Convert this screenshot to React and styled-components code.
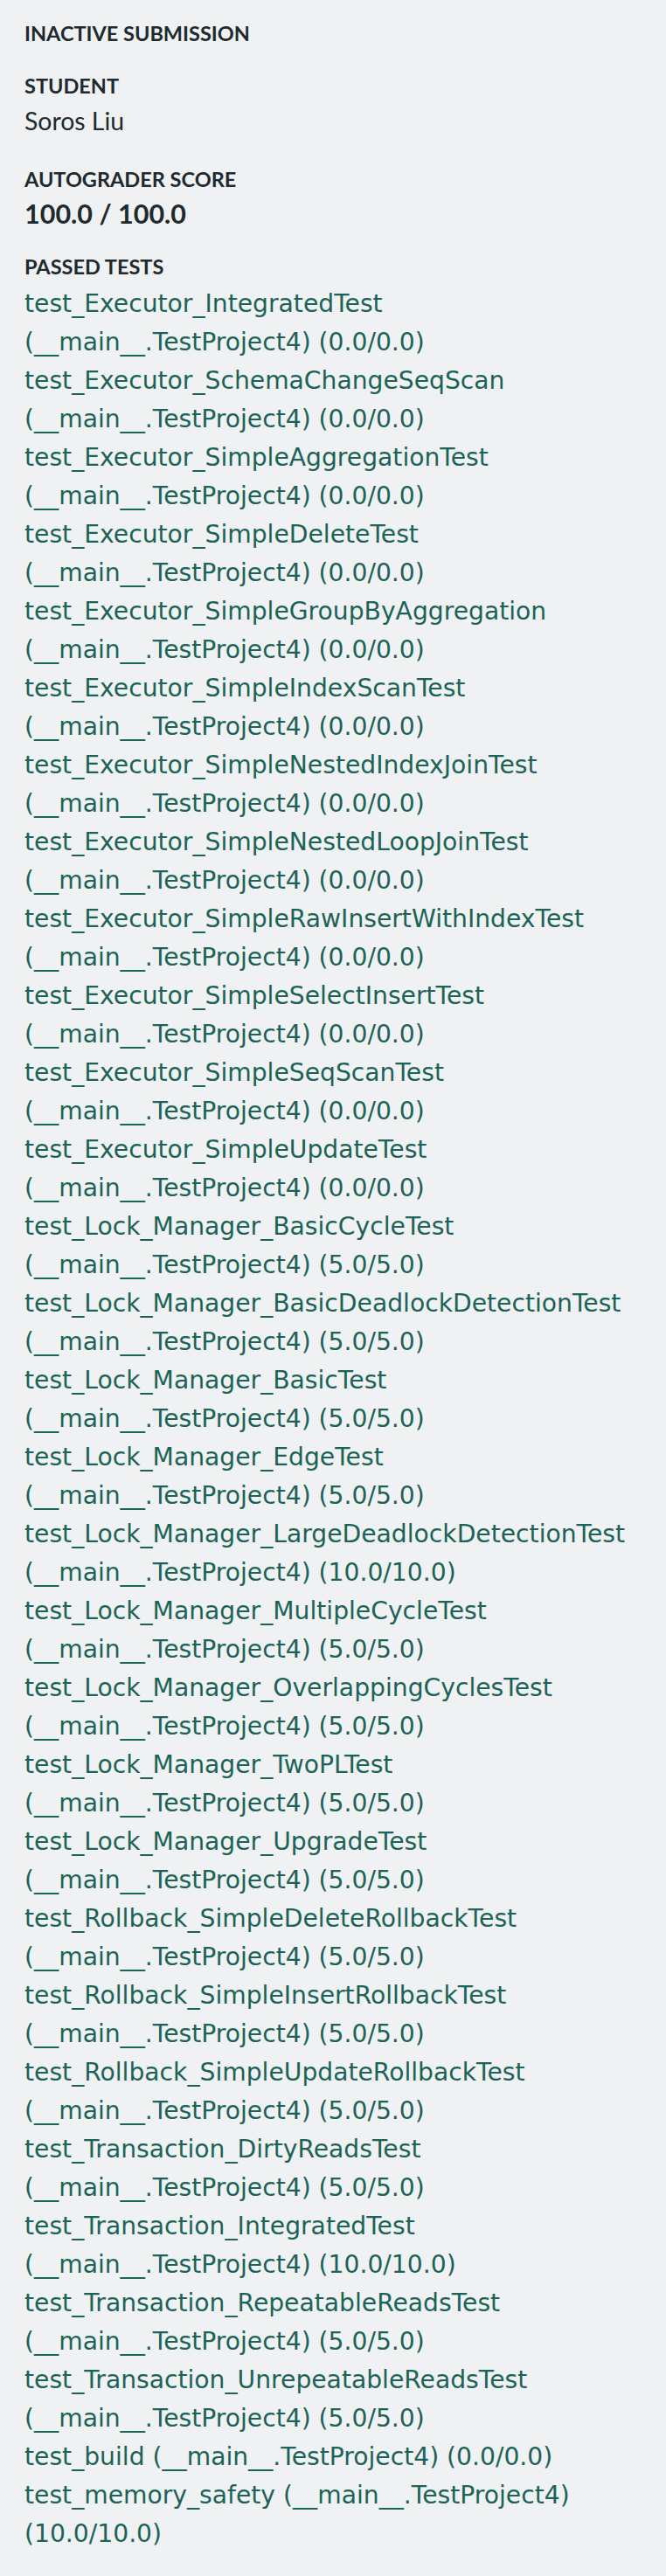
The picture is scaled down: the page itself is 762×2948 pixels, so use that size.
import React from 'react';
import styled, { createGlobalStyle } from 'styled-components';

const GlobalStyle = createGlobalStyle`
  html, body {
    margin: 0;
    padding: 0;
    background-color: #eff1f3;
  }
  body {
    font-family: Lato, "Liberation Sans", sans-serif;
  }
`;

const Page = styled.div`
  padding: 20px 28px 24px 28px;
  background-color: #eff1f3;
  min-height: 2948px;
  box-sizing: border-box;
`;

const Section = styled.section`
  margin-top: ${(props) => props.gap || 0}px;
`;

const Label = styled.h2`
  margin: 0;
  font-size: 23.5px;
  line-height: 37px;
  font-weight: 700;
  text-transform: uppercase;
  color: #1e2a2d;
`;

const Value = styled.div`
  font-size: 28.4px;
  line-height: 42.6px;
  color: #1e2a2d;
`;

const Score = styled.div`
  font-size: 30.5px;
  line-height: 40px;
  font-weight: 700;
  color: #1e2a2d;
`;

const TestList = styled.ul`
  list-style: none;
  margin: 2px 0 0 0;
  padding: 0;
`;

const TestItem = styled.li`
  font-family: "DejaVu Sans", Lato, sans-serif;
  font-size: 28.2px;
  line-height: 44px;
  color: #1c6357;
`;

const tests = [
  ['test_Executor_IntegratedTest', '0.0/0.0'],
  ['test_Executor_SchemaChangeSeqScan', '0.0/0.0'],
  ['test_Executor_SimpleAggregationTest', '0.0/0.0'],
  ['test_Executor_SimpleDeleteTest', '0.0/0.0'],
  ['test_Executor_SimpleGroupByAggregation', '0.0/0.0'],
  ['test_Executor_SimpleIndexScanTest', '0.0/0.0'],
  ['test_Executor_SimpleNestedIndexJoinTest', '0.0/0.0'],
  ['test_Executor_SimpleNestedLoopJoinTest', '0.0/0.0'],
  ['test_Executor_SimpleRawInsertWithIndexTest', '0.0/0.0'],
  ['test_Executor_SimpleSelectInsertTest', '0.0/0.0'],
  ['test_Executor_SimpleSeqScanTest', '0.0/0.0'],
  ['test_Executor_SimpleUpdateTest', '0.0/0.0'],
  ['test_Lock_Manager_BasicCycleTest', '5.0/5.0'],
  ['test_Lock_Manager_BasicDeadlockDetectionTest', '5.0/5.0'],
  ['test_Lock_Manager_BasicTest', '5.0/5.0'],
  ['test_Lock_Manager_EdgeTest', '5.0/5.0'],
  ['test_Lock_Manager_LargeDeadlockDetectionTest', '10.0/10.0'],
  ['test_Lock_Manager_MultipleCycleTest', '5.0/5.0'],
  ['test_Lock_Manager_OverlappingCyclesTest', '5.0/5.0'],
  ['test_Lock_Manager_TwoPLTest', '5.0/5.0'],
  ['test_Lock_Manager_UpgradeTest', '5.0/5.0'],
  ['test_Rollback_SimpleDeleteRollbackTest', '5.0/5.0'],
  ['test_Rollback_SimpleInsertRollbackTest', '5.0/5.0'],
  ['test_Rollback_SimpleUpdateRollbackTest', '5.0/5.0'],
  ['test_Transaction_DirtyReadsTest', '5.0/5.0'],
  ['test_Transaction_IntegratedTest', '10.0/10.0'],
  ['test_Transaction_RepeatableReadsTest', '5.0/5.0'],
  ['test_Transaction_UnrepeatableReadsTest', '5.0/5.0'],
  ['test_build', '0.0/0.0'],
  ['test_memory_safety', '10.0/10.0'],
];

const App = () => {
  return (
    <Page>
      <GlobalStyle />
      <Section>
        <Label>Inactive Submission</Label>
      </Section>

      <Section gap={23}>
        <Label>Student</Label>
        <Value>Soros Liu</Value>
      </Section>

      <Section gap={27}>
        <Label>Autograder Score</Label>
        <Score>100.0 / 100.0</Score>
      </Section>

      <Section gap={23}>
        <Label>Passed Tests</Label>
        <TestList>
          {tests.map(([name, score]) => (
            <TestItem key={name}>
              {name} (__main__.TestProject4) ({score})
            </TestItem>
          ))}
        </TestList>
      </Section>
    </Page>
  );
};

export default App;
